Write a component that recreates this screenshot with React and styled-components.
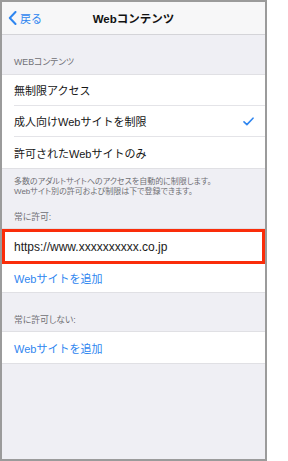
import React from 'react';
import styled, { createGlobalStyle } from 'styled-components';

const FONT = `"Liberation Sans", "Noto Sans CJK JP", sans-serif`;
const BLUE = '#2f86f0';
const GROUP_BG = '#efeff4';

const GlobalStyle = createGlobalStyle`
  html, body {
    margin: 0;
    padding: 0;
    background: #fff;
  }
  body {
    font-family: ${FONT};
  }
`;

const Page = styled.div`
  width: 288px;
  height: 461px;
  background: #fff;
`;

const Phone = styled.div`
  width: 267px;
  height: 461px;
  box-sizing: border-box;
  border: 2px solid #9b9b9b;
  background: ${GROUP_BG};
  display: flex;
  flex-direction: column;
  overflow: hidden;
`;

const NavBar = styled.div`
  height: 33px;
  flex-shrink: 0;
  box-sizing: border-box;
  background: #f7f7f8;
  border-bottom: 1px solid #d4d4d8;
  display: grid;
  grid-template-columns: 1fr auto 1fr;
  align-items: center;
`;

const BackButton = styled.div`
  display: flex;
  align-items: center;
  gap: 3px;
  padding-left: 6px;
  color: ${BLUE};
  font-size: 11px;
`;

const NavTitle = styled.div`
  font-size: 11.5px;
  font-weight: bold;
  color: #111;
`;

const SectionHeader = styled.div`
  height: ${(p) => p.h}px;
  box-sizing: border-box;
  display: flex;
  align-items: flex-end;
  padding: 0 0 ${(p) => p.pb}px 12px;
  font-size: 8.8px;
  color: #6f6f74;
  font-feature-settings: "palt";
`;

const Group = styled.div`
  background: #fff;
  border-top: 1px solid #e0e0e4;
  border-bottom: 1px solid #e0e0e4;
`;

const Row = styled.div`
  height: ${(p) => p.h || 31}px;
  box-sizing: border-box;
  margin-left: 12px;
  padding-right: 11px;
  display: flex;
  align-items: center;
  justify-content: space-between;
  font-size: 11px;
  color: ${(p) => (p.link ? BLUE : '#161616')};
  border-bottom: ${(p) => (p.last ? 'none' : '1px solid #e4e4e8')};
`;

const HighlightRow = styled.div`
  height: 35px;
  box-sizing: border-box;
  border: 3px solid #fa2d0a;
  padding-left: 9px;
  display: flex;
  align-items: center;
  font-size: 12px;
  color: #1a1a1a;
`;

const Footer = styled.div`
  padding: 8px 11px 0 12px;
  font-size: 8px;
  line-height: 10px;
  color: #707075;
  font-feature-settings: "palt";
  white-space: nowrap;
`;

const Chevron = () => (
  <svg width="9" height="14" viewBox="0 0 9 14">
    <path d="M7.5 1 L1.8 7 L7.5 13" fill="none" stroke={BLUE} strokeWidth="2" strokeLinecap="round" strokeLinejoin="round" />
  </svg>
);

const Check = () => (
  <svg width="11" height="9" viewBox="0 0 11 9">
    <path d="M1 4.8 L3.9 7.6 L10 1.2" fill="none" stroke={BLUE} strokeWidth="1.6" strokeLinecap="round" strokeLinejoin="round" />
  </svg>
);

const App = () => (
  <Page>
    <GlobalStyle />
    <Phone>
      <NavBar>
        <BackButton>
          <Chevron />
          <span>戻る</span>
        </BackButton>
        <NavTitle>Webコンテンツ</NavTitle>
        <div />
      </NavBar>

      <SectionHeader h={39} pb={6}>WEBコンテンツ</SectionHeader>
      <Group>
        <Row>無制限アクセス</Row>
        <Row>
          <span>成人向けWebサイトを制限</span>
          <Check />
        </Row>
        <Row last>許可されたWebサイトのみ</Row>
      </Group>
      <Footer>
        多数のアダルトサイトへのアクセスを自動的に制限します。
        <br />
        Webサイト別の許可および制限は下で登録できます。
      </Footer>

      <SectionHeader h={31} pb={5}>常に許可:</SectionHeader>
      <Group>
        <HighlightRow>https://www.xxxxxxxxxx.co.jp</HighlightRow>
        <Row link last h={28}>Webサイトを追加</Row>
      </Group>

      <SectionHeader h={38} pb={5}>常に許可しない:</SectionHeader>
      <Group>
        <Row link last h={31}>Webサイトを追加</Row>
      </Group>
    </Phone>
  </Page>
);

export default App;
